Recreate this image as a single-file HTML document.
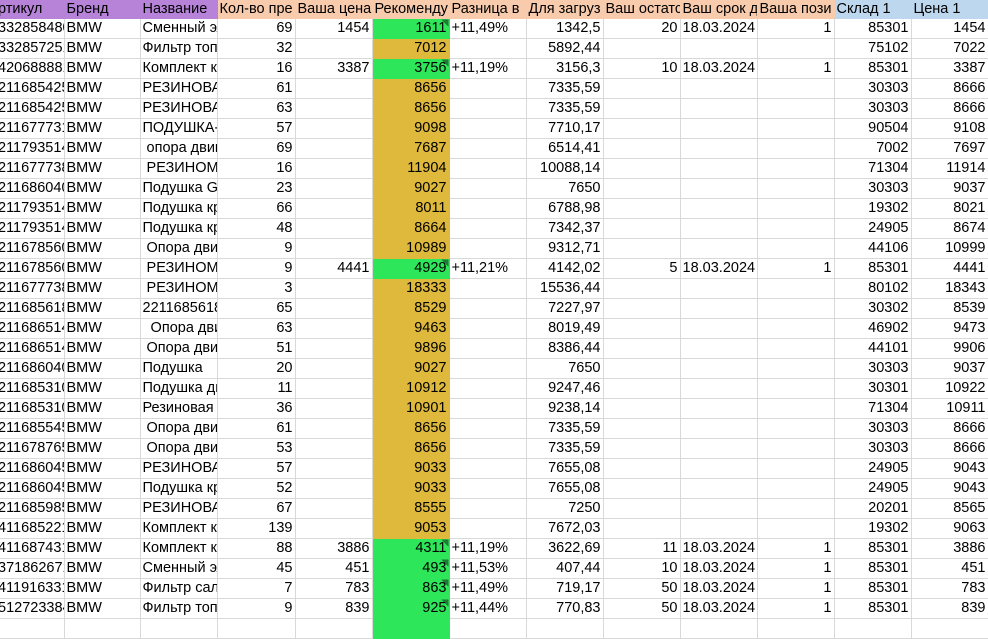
<!DOCTYPE html>
<html><head><meta charset="utf-8"><style>
body{margin:0;width:988px;height:621px;overflow:hidden;background:#fff;font-family:"Liberation Sans",Arial,sans-serif;font-size:14.5px;color:#000}
table{border-collapse:collapse;table-layout:fixed;width:988px;position:absolute;left:0;top:0}
td{height:19px;padding:0 2px;border:1px solid #d9d9d9;white-space:nowrap;overflow:hidden;line-height:19px}
tr.h td{height:17px;line-height:17px}
.p{background:#b683d9;border-color:#b683d9!important}.o{background:#f8cbad;border-color:#f8cbad!important}.b{background:#bdd7ee;border-color:#bdd7ee!important}
.r{text-align:right}
.a{border-right:none;border-left:none;text-indent:-4px}
.g{background:linear-gradient(225deg,#1e7b34 5px,#2ee659 5px);border-color:#2ee659}
.y{background:#dfb93c;border-color:#dfb93c}
</style></head><body>
<table>
<colgroup><col style="width:64px"><col style="width:76px"><col style="width:77px"><col style="width:78px"><col style="width:77px"><col style="width:77px"><col style="width:77px"><col style="width:77px"><col style="width:77px"><col style="width:77px"><col style="width:77px"><col style="width:77px"><col style="width:77px"></colgroup>
<tr class="h"><td class="p a">ртикул</td><td class="p">Бренд</td><td class="p">Название</td><td class="o">Кол-во пре</td><td class="o">Ваша цена</td><td class="o">Рекоменду</td><td class="o">Разница в</td><td class="o">Для загруз</td><td class="o">Ваш остатс</td><td class="o">Ваш срок д</td><td class="o">Ваша пози</td><td class="b">Склад 1</td><td class="b">Цена 1</td></tr>
<tr><td class="a">332858480</td><td>BMW</td><td>Сменный элемент</td><td class="r">69</td><td class="r">1454</td><td class="r g">1611</td><td>+11,49%</td><td class="r">1342,5</td><td class="r">20</td><td>18.03.2024</td><td class="r">1</td><td class="r">85301</td><td class="r">1454</td></tr>
<tr><td class="a">332857251</td><td>BMW</td><td>Фильтр топливный</td><td class="r">32</td><td></td><td class="r y">7012</td><td></td><td class="r">5892,44</td><td></td><td></td><td></td><td class="r">75102</td><td class="r">7022</td></tr>
<tr><td class="a">420688881</td><td>BMW</td><td>Комплект к</td><td class="r">16</td><td class="r">3387</td><td class="r g">3756</td><td>+11,19%</td><td class="r">3156,3</td><td class="r">10</td><td>18.03.2024</td><td class="r">1</td><td class="r">85301</td><td class="r">3387</td></tr>
<tr><td class="a">211685425</td><td>BMW</td><td>РЕЗИНОВАЯ</td><td class="r">61</td><td></td><td class="r y">8656</td><td></td><td class="r">7335,59</td><td></td><td></td><td></td><td class="r">30303</td><td class="r">8666</td></tr>
<tr><td class="a">211685425</td><td>BMW</td><td>РЕЗИНОВАЯ</td><td class="r">63</td><td></td><td class="r y">8656</td><td></td><td class="r">7335,59</td><td></td><td></td><td></td><td class="r">30303</td><td class="r">8666</td></tr>
<tr><td class="a">211677731</td><td>BMW</td><td>ПОДУШКА-</td><td class="r">57</td><td></td><td class="r y">9098</td><td></td><td class="r">7710,17</td><td></td><td></td><td></td><td class="r">90504</td><td class="r">9108</td></tr>
<tr><td class="a">211793514</td><td>BMW</td><td>&nbsp;опора двигателя</td><td class="r">69</td><td></td><td class="r y">7687</td><td></td><td class="r">6514,41</td><td></td><td></td><td></td><td class="r">7002</td><td class="r">7697</td></tr>
<tr><td class="a">211677738</td><td>BMW</td><td>&nbsp;РЕЗИНОМЕТ</td><td class="r">16</td><td></td><td class="r y">11904</td><td></td><td class="r">10088,14</td><td></td><td></td><td></td><td class="r">71304</td><td class="r">11914</td></tr>
<tr><td class="a">211686040</td><td>BMW</td><td>Подушка G</td><td class="r">23</td><td></td><td class="r y">9027</td><td></td><td class="r">7650</td><td></td><td></td><td></td><td class="r">30303</td><td class="r">9037</td></tr>
<tr><td class="a">211793514</td><td>BMW</td><td>Подушка кр</td><td class="r">66</td><td></td><td class="r y">8011</td><td></td><td class="r">6788,98</td><td></td><td></td><td></td><td class="r">19302</td><td class="r">8021</td></tr>
<tr><td class="a">211793514</td><td>BMW</td><td>Подушка кр</td><td class="r">48</td><td></td><td class="r y">8664</td><td></td><td class="r">7342,37</td><td></td><td></td><td></td><td class="r">24905</td><td class="r">8674</td></tr>
<tr><td class="a">211678560</td><td>BMW</td><td>&nbsp;Опора двигателя</td><td class="r">9</td><td></td><td class="r y">10989</td><td></td><td class="r">9312,71</td><td></td><td></td><td></td><td class="r">44106</td><td class="r">10999</td></tr>
<tr><td class="a">211678560</td><td>BMW</td><td>&nbsp;РЕЗИНОМЕТ</td><td class="r">9</td><td class="r">4441</td><td class="r g">4929</td><td>+11,21%</td><td class="r">4142,02</td><td class="r">5</td><td>18.03.2024</td><td class="r">1</td><td class="r">85301</td><td class="r">4441</td></tr>
<tr><td class="a">211677738</td><td>BMW</td><td>&nbsp;РЕЗИНОМЕТ</td><td class="r">3</td><td></td><td class="r y">18333</td><td></td><td class="r">15536,44</td><td></td><td></td><td></td><td class="r">80102</td><td class="r">18343</td></tr>
<tr><td class="a">211685618</td><td>BMW</td><td>2211685618</td><td class="r">65</td><td></td><td class="r y">8529</td><td></td><td class="r">7227,97</td><td></td><td></td><td></td><td class="r">30302</td><td class="r">8539</td></tr>
<tr><td class="a">211686514</td><td>BMW</td><td>&nbsp;&nbsp;Опора двигателя</td><td class="r">63</td><td></td><td class="r y">9463</td><td></td><td class="r">8019,49</td><td></td><td></td><td></td><td class="r">46902</td><td class="r">9473</td></tr>
<tr><td class="a">211686514</td><td>BMW</td><td>&nbsp;Опора двигателя</td><td class="r">51</td><td></td><td class="r y">9896</td><td></td><td class="r">8386,44</td><td></td><td></td><td></td><td class="r">44101</td><td class="r">9906</td></tr>
<tr><td class="a">211686040</td><td>BMW</td><td>Подушка</td><td class="r">20</td><td></td><td class="r y">9027</td><td></td><td class="r">7650</td><td></td><td></td><td></td><td class="r">30303</td><td class="r">9037</td></tr>
<tr><td class="a">211685310</td><td>BMW</td><td>Подушка дв</td><td class="r">11</td><td></td><td class="r y">10912</td><td></td><td class="r">9247,46</td><td></td><td></td><td></td><td class="r">30301</td><td class="r">10922</td></tr>
<tr><td class="a">211685310</td><td>BMW</td><td>Резиновая</td><td class="r">36</td><td></td><td class="r y">10901</td><td></td><td class="r">9238,14</td><td></td><td></td><td></td><td class="r">71304</td><td class="r">10911</td></tr>
<tr><td class="a">211685545</td><td>BMW</td><td>&nbsp;Опора двигателя</td><td class="r">61</td><td></td><td class="r y">8656</td><td></td><td class="r">7335,59</td><td></td><td></td><td></td><td class="r">30303</td><td class="r">8666</td></tr>
<tr><td class="a">211678765</td><td>BMW</td><td>&nbsp;Опора двигателя</td><td class="r">53</td><td></td><td class="r y">8656</td><td></td><td class="r">7335,59</td><td></td><td></td><td></td><td class="r">30303</td><td class="r">8666</td></tr>
<tr><td class="a">211686045</td><td>BMW</td><td>РЕЗИНОВАЯ</td><td class="r">57</td><td></td><td class="r y">9033</td><td></td><td class="r">7655,08</td><td></td><td></td><td></td><td class="r">24905</td><td class="r">9043</td></tr>
<tr><td class="a">211686045</td><td>BMW</td><td>Подушка кр</td><td class="r">52</td><td></td><td class="r y">9033</td><td></td><td class="r">7655,08</td><td></td><td></td><td></td><td class="r">24905</td><td class="r">9043</td></tr>
<tr><td class="a">211685985</td><td>BMW</td><td>РЕЗИНОВАЯ</td><td class="r">67</td><td></td><td class="r y">8555</td><td></td><td class="r">7250</td><td></td><td></td><td></td><td class="r">20201</td><td class="r">8565</td></tr>
<tr><td class="a">411685221</td><td>BMW</td><td>Комплект к</td><td class="r">139</td><td></td><td class="r y">9053</td><td></td><td class="r">7672,03</td><td></td><td></td><td></td><td class="r">19302</td><td class="r">9063</td></tr>
<tr><td class="a">411687431</td><td>BMW</td><td>Комплект к</td><td class="r">88</td><td class="r">3886</td><td class="r g">4311</td><td>+11,19%</td><td class="r">3622,69</td><td class="r">11</td><td>18.03.2024</td><td class="r">1</td><td class="r">85301</td><td class="r">3886</td></tr>
<tr><td class="a">371862671</td><td>BMW</td><td>Сменный элемент</td><td class="r">45</td><td class="r">451</td><td class="r g">493</td><td>+11,53%</td><td class="r">407,44</td><td class="r">10</td><td>18.03.2024</td><td class="r">1</td><td class="r">85301</td><td class="r">451</td></tr>
<tr><td class="a">411916331</td><td>BMW</td><td>Фильтр салонный</td><td class="r">7</td><td class="r">783</td><td class="r g">863</td><td>+11,49%</td><td class="r">719,17</td><td class="r">50</td><td>18.03.2024</td><td class="r">1</td><td class="r">85301</td><td class="r">783</td></tr>
<tr><td class="a">512723384</td><td>BMW</td><td>Фильтр топливный</td><td class="r">9</td><td class="r">839</td><td class="r g">925</td><td>+11,44%</td><td class="r">770,83</td><td class="r">50</td><td>18.03.2024</td><td class="r">1</td><td class="r">85301</td><td class="r">839</td></tr>
<tr><td class="a">&nbsp;</td><td></td><td></td><td></td><td></td><td style="background:#2ee659;border-color:#2ee659"></td><td></td><td></td><td></td><td></td><td></td><td></td><td></td></tr>
</table>
</body></html>
